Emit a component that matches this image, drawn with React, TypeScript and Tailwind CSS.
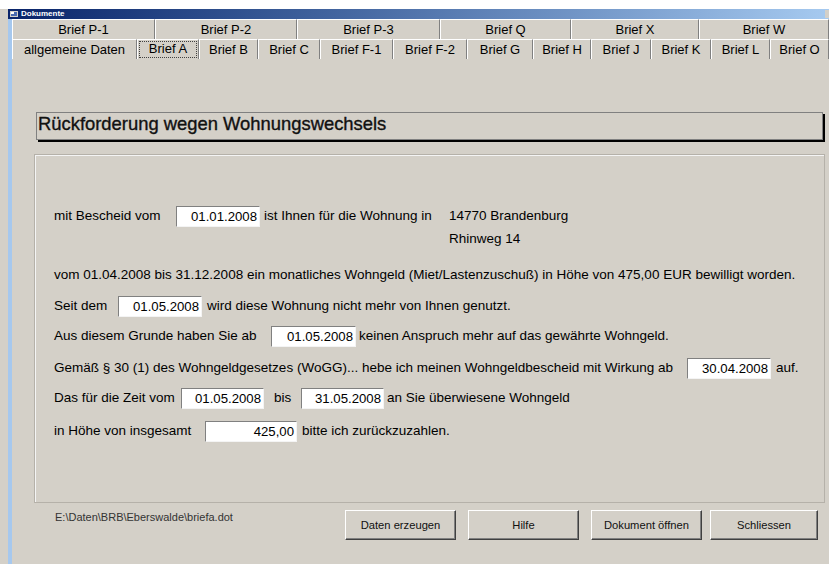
import React from "react";

const row1 = [
  { label: "Brief P-1", w: 143 },
  { label: "Brief P-2", w: 142 },
  { label: "Brief P-3", w: 143 },
  { label: "Brief Q", w: 131 },
  { label: "Brief X", w: 128 },
  { label: "Brief W", w: 130 },
];

const row2 = [
  { label: "allgemeine Daten", w: 125 },
  { label: "Brief A", w: 62, active: true },
  { label: "Brief B", w: 59 },
  { label: "Brief C", w: 62 },
  { label: "Brief F-1", w: 73 },
  { label: "Brief F-2", w: 74 },
  { label: "Brief G", w: 66 },
  { label: "Brief H", w: 58 },
  { label: "Brief J", w: 60 },
  { label: "Brief K", w: 60 },
  { label: "Brief L", w: 59 },
  { label: "Brief O", w: 59 },
];

function Tab({ label, w, active }: { label: string; w: number; active?: boolean }) {
  return (
    <div
      className="relative flex h-[20px] shrink-0 items-center justify-center border-l border-r border-t border-l-white border-r-[#808080] border-t-white text-[13px] leading-none text-black"
      style={{ width: w }}
    >
      {active ? (
        <span className="absolute inset-[1px] border border-dotted border-[#404040]" />
      ) : null}
      <span className={active ? "-mt-[2px]" : ""}>{label}</span>
    </div>
  );
}

function Field({ value, w }: { value: string; w: number }) {
  return (
    <div
      className="flex h-[21px] shrink-0 items-center justify-end border-l border-t border-b border-r border-l-[#808080] border-t-[#808080] border-b-[#f4f4f4] border-r-[#f4f4f4] bg-white pr-[2px] text-[13.2px] text-black"
      style={{ width: w }}
    >
      {value}
    </div>
  );
}

function Txt({ children, className = "" }: { children: React.ReactNode; className?: string }) {
  return (
    <span className={`flex h-[21px] shrink-0 items-center whitespace-nowrap text-[13.5px] text-black ${className}`}>
      {children}
    </span>
  );
}

function Btn({ label, w }: { label: string; w: number }) {
  return (
    <div
      className="flex h-[30px] shrink-0 items-center justify-center border-l border-t border-r border-b border-l-white border-t-white border-r-[#404040] border-b-[#404040] bg-[#d4d0c8] text-[11.2px] text-[#111] shadow-[inset_-1px_-1px_0_#808080]"
      style={{ width: w }}
    >
      {label}
    </div>
  );
}

export default function App() {
  return (
    <div className="flex h-[564px] w-[829px] flex-col overflow-hidden bg-[#d4d0c8] font-['Liberation_Sans',Arial,sans-serif]">
      {/* white strip above the window */}
      <div className="h-[9px] shrink-0 bg-white" />
      <div className="flex min-h-0 flex-1">
        <div className="w-[8px] shrink-0 bg-[#d4d0c8]" />
        <div className="flex min-w-0 flex-1 flex-col">
          {/* caption bar */}
          <div className="flex h-[10px] shrink-0 items-center bg-gradient-to-r from-[#0a246a] to-[#a6caf0]">
            <svg width="8" height="6" viewBox="0 0 8 6" className="ml-[2px] mr-[3px]">
              <rect x="0" y="0" width="8" height="6" fill="#d4d0c8" />
              <rect x="1" y="1" width="6" height="4" fill="#4a6ab0" />
              <rect x="1" y="1" width="3" height="2" fill="#ffffff" />
            </svg>
            <span className="text-[8px] font-bold leading-none text-white">Dokumente</span>
            <div className="ml-auto h-[8px] w-[4px] bg-[#d4d0c8]" />
          </div>
          <div className="flex min-h-0 flex-1">
            {/* left window frame */}
            <div className="w-[4px] shrink-0 bg-[#a6c8ee]" />
            <div className="flex min-w-0 flex-1 flex-col">
              <div className="flex">
                {row1.map((t) => (
                  <Tab key={t.label} {...t} />
                ))}
              </div>
              <div className="flex">
                {row2.map((t) => (
                  <Tab key={t.label} {...t} />
                ))}
              </div>

              {/* form heading */}
              <div className="ml-[24px] mt-[53px] h-[28px] w-[787px] border border-[#808080] pl-[1px] pt-[1px] text-[18.4px] leading-[20px] text-[#111] shadow-[2px_2px_0_#000] [-webkit-text-stroke:0.35px_#111]">
                Rückforderung wegen Wohnungswechsels
              </div>

              {/* letter body */}
              <div className="ml-[22px] mt-[14px] h-[349px] w-[791px] border border-[#b5b1a9] pl-[19px] pt-[51px] shadow-[inset_1px_1px_0_#f4f4f4]">
                <div className="flex items-start">
                  <Txt className="w-[122px]">mit Bescheid vom</Txt>
                  <Field value="01.01.2008" w={84} />
                  <Txt className="ml-[4px] w-[185px]">ist Ihnen für die Wohnung in</Txt>
                  <div className="flex flex-col gap-[2px]">
                    <Txt>14770 Brandenburg</Txt>
                    <Txt>Rhinweg 14</Txt>
                  </div>
                </div>

                <div className="mt-[15px] flex">
                  <Txt>
                    vom 01.04.2008 bis 31.12.2008 ein monatliches Wohngeld (Miet/Lastenzuschuß) in Höhe von 475,00 EUR bewilligt worden.
                  </Txt>
                </div>

                <div className="mt-[10px] flex">
                  <Txt className="w-[64px]">Seit dem</Txt>
                  <Field value="01.05.2008" w={84} />
                  <Txt className="ml-[5px]">wird diese Wohnung nicht mehr von Ihnen genutzt.</Txt>
                </div>

                <div className="mt-[9px] flex">
                  <Txt className="w-[217px]">Aus diesem Grunde haben Sie ab</Txt>
                  <Field value="01.05.2008" w={85} />
                  <Txt className="ml-[3px]">keinen Anspruch mehr auf das gewährte Wohngeld.</Txt>
                </div>

                <div className="mt-[11px] flex">
                  <Txt className="w-[633px]">
                    Gemäß § 30 (1) des Wohngeldgesetzes (WoGG)... hebe ich meinen Wohngeldbescheid mit Wirkung ab
                  </Txt>
                  <Field value="30.04.2008" w={84} />
                  <Txt className="ml-[5px]">auf.</Txt>
                </div>

                <div className="mt-[9px] flex">
                  <Txt className="w-[127px]">Das für die Zeit vom</Txt>
                  <Field value="01.05.2008" w={83} />
                  <Txt className="w-[37px] pl-[10px]">bis</Txt>
                  <Field value="31.05.2008" w={83} />
                  <Txt className="ml-[3px]">an Sie überwiesene Wohngeld</Txt>
                </div>

                <div className="mt-[12px] flex">
                  <Txt className="w-[151px]">in Höhe von insgesamt</Txt>
                  <Field value="425,00" w={92} />
                  <Txt className="ml-[5px]">bitte ich zurückzuzahlen.</Txt>
                </div>
              </div>

              {/* footer: template path and actions */}
              <div className="mt-[7px] flex items-start">
                <div className="w-[333px] shrink-0 pl-[43px] pt-[1px] text-[11px] leading-[13px] text-[#333]">
                  E:\Daten\BRB\Eberswalde\briefa.dot
                </div>
                <Btn label="Daten erzeugen" w={111} />
                <div className="w-[12px] shrink-0" />
                <Btn label="Hilfe" w={111} />
                <div className="w-[12px] shrink-0" />
                <Btn label="Dokument öffnen" w={111} />
                <div className="w-[8px] shrink-0" />
                <Btn label="Schliessen" w={108} />
              </div>
            </div>
          </div>
        </div>
      </div>
    </div>
  );
}
